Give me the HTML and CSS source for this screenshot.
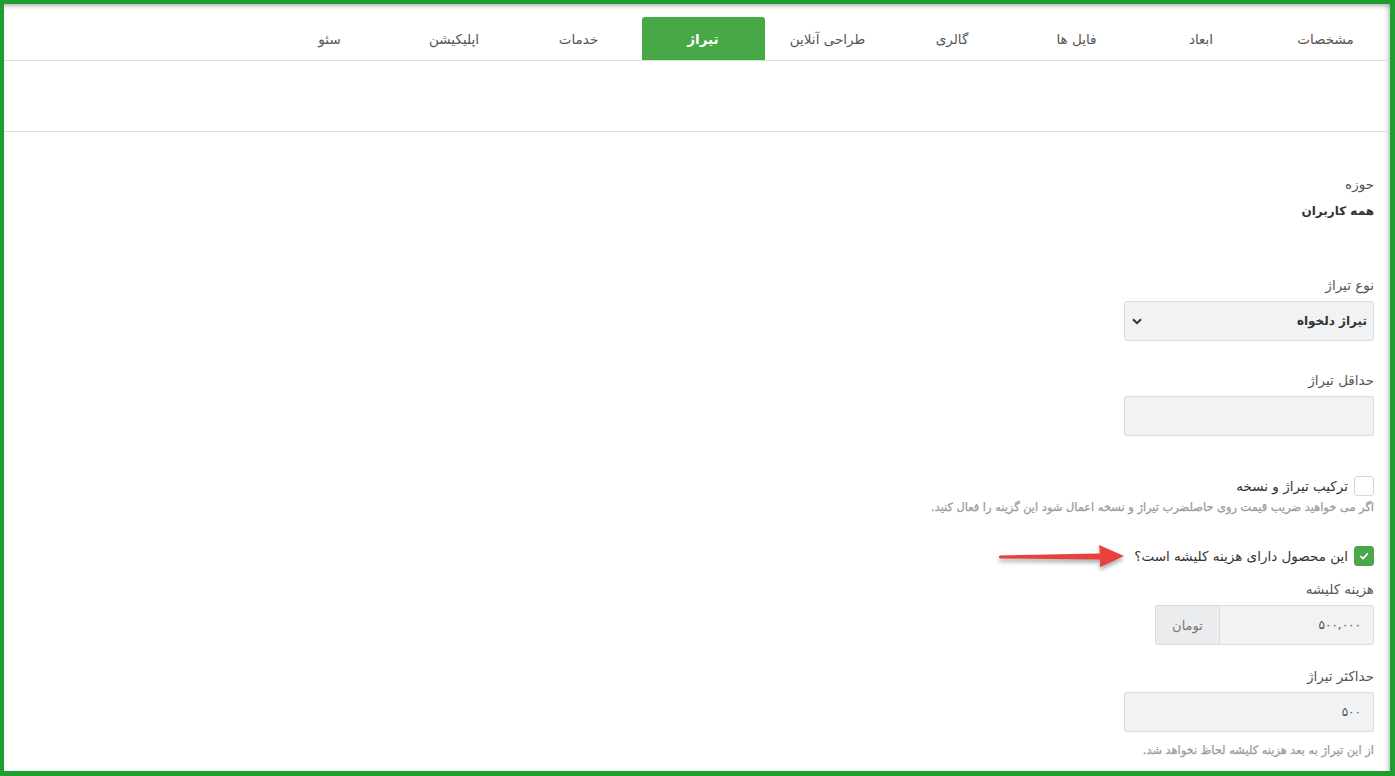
FILE: index.html
```html
<!DOCTYPE html>
<html lang="fa" dir="rtl">
<head>
<meta charset="utf-8">
<title>تیراژ</title>
<link rel="stylesheet" href="styles.css">
</head>
<body>
<div class="frame">
  <nav class="tabs">
    <a class="tab">مشخصات</a>
    <a class="tab">ابعاد</a>
    <a class="tab">فایل ها</a>
    <a class="tab">گالری</a>
    <a class="tab">طراحی آنلاین</a>
    <a class="tab active">تیراژ</a>
    <a class="tab">خدمات</a>
    <a class="tab">اپلیکیشن</a>
    <a class="tab">سئو</a>
  </nav>
  <div class="spacer"></div>
  <main class="form">
    <div class="group g-scope">
      <div class="label">حوزه</div>
      <div class="value">همه کاربران</div>
    </div>
    <div class="group g-type">
      <div class="label">نوع تیراژ</div>
      <div class="field select">
        <span class="select-text">تیراژ دلخواه</span>
        <svg class="chev" width="10" height="7" viewBox="0 0 10 7"><path d="M1 1.2 L5 5.2 L9 1.2" fill="none" stroke="#333" stroke-width="2"/></svg>
      </div>
    </div>
    <div class="group g-min">
      <div class="label">حداقل تیراژ</div>
      <div class="field input"></div>
    </div>
    <div class="group g-combo">
      <div class="check-row">
        <span class="box"></span>
        <span class="check-label">ترکیب تیراژ و نسخه</span>
      </div>
      <div class="help">اگر می خواهید ضریب قیمت روی حاصلضرب تیراژ و نسخه اعمال شود این گزینه را فعال کنید.</div>
    </div>
    <div class="group g-plate">
      <div class="check-row">
        <span class="box checked"><svg width="10" height="8" viewBox="0 0 10 8"><path d="M1.2 4 L4 6.6 L8.8 1.4" fill="none" stroke="#fff" stroke-width="1.6"/></svg></span>
        <span class="check-label">این محصول دارای هزینه کلیشه است؟</span>
        <svg class="arrow" width="136" height="34" viewBox="0 0 136 34"><path d="M4 14.5 L104 12.5 L103 4 L128 15 L104 26 L104 18.5 L4 17.5 Q1.5 16 4 14.5 Z" fill="#e8403b"/></svg>
      </div>
    </div>
    <div class="group g-cost">
      <div class="label">هزینه کلیشه</div>
      <div class="input-group">
        <div class="field input narrow"><span class="num">۵۰۰,۰۰۰</span></div>
        <div class="addon">تومان</div>
      </div>
    </div>
    <div class="group g-max">
      <div class="label">حداکثر تیراژ</div>
      <div class="field input"><span class="num">۵۰۰</span></div>
      <div class="help help-2">از این تیراژ به بعد هزینه کلیشه لحاظ نخواهد شد.</div>
    </div>
  </main>
</div>
</body>
</html>
```
FILE: styles.css
```css
html, body {
  margin: 0;
  padding: 0;
}
body {
  background: #1f9e2f;
  padding: 4px 5px 5px 4px;
  font-family: "DejaVu Sans", "Noto Sans", sans-serif;
  color: #333;
}
.frame {
  background: #fff;
  height: 767px;
  box-shadow: inset 0 5px 5px -3px rgba(0,0,0,0.28), inset -4px 0 4px -2px rgba(0,0,0,0.22);
  overflow: hidden;
  position: relative;
}
.tabs {
  display: flex;
  gap: 1.5px;
  padding: 13px 3px 0 0;
  height: 43px;
  border-bottom: 1px solid #dedede;
}
.tab {
  width: 123px;
  height: 43px;
  display: flex;
  align-items: center;
  justify-content: center;
  font-size: 13.5px;
  color: #555;
  border-radius: 3px 3px 0 0;
}
.tab.active {
  background: #47a846;
  color: #fff;
  font-weight: bold;
}
.spacer {
  height: 70px;
  border-bottom: 1px solid #dedede;
}
.form {
  padding: 42px 16px 0 0;
  display: flex;
  flex-direction: column;
  align-items: flex-start;
}
.group {
  display: flex;
  flex-direction: column;
  align-items: flex-start;
}
.label {
  font-size: 13.5px;
  line-height: 20px;
  color: #555;
  margin-bottom: 6px;
}
.value {
  font-size: 12px;
  font-weight: bold;
  line-height: 20px;
  color: #333;
  margin-top: 1px;
}
.g-type { margin-top: 54px; }
.g-min { margin-top: 29px; }
.g-combo { margin-top: 40px; }
.g-plate { margin-top: 30px; }
.g-cost { margin-top: 13px; }
.g-max { margin-top: 21px; }
.field {
  box-sizing: border-box;
  width: 250px;
  height: 40px;
  background: #f1f2f4;
  border: 1px solid #dcdcdc;
  border-radius: 3px;
  display: flex;
  align-items: center;
  justify-content: space-between;
  padding: 0 12px 0 7px;
}
.field.select {
  padding-right: 6px;
}
.select-text {
  font-size: 12px;
  font-weight: bold;
  color: #333;
}
.chev { display: block; }
.num {
  font-size: 12px;
  color: #555;
}
.check-row {
  display: flex;
  align-items: center;
  gap: 6px;
  height: 20px;
  position: relative;
}
.box {
  box-sizing: border-box;
  width: 20px;
  height: 20px;
  border: 1px solid #d6d6d6;
  border-radius: 3px;
  background: #fff;
  display: flex;
  align-items: center;
  justify-content: center;
}
.box.checked {
  background: #4aa84a;
  border-color: #4aa84a;
}
.box svg { display: block; }
.check-label {
  font-size: 13.5px;
  color: #333;
  line-height: 20px;
}
.help {
  font-size: 11.4px;
  font-weight: normal;
  color: #9a9a9a;
  line-height: 18px;
  margin-top: 2px;
  -webkit-text-stroke: 0.25px #9a9a9a;
}
.help-2 { margin-top: 9px; }
.arrow {
  position: absolute;
  left: -138px;
  top: -5px;
  filter: drop-shadow(0 3px 2px rgba(0,0,0,0.35));
}
.input-group {
  display: flex;
  width: 219px;
}
.field.narrow {
  width: 155px;
  border-radius: 0 3px 3px 0;
}
.addon {
  box-sizing: border-box;
  width: 64px;
  height: 40px;
  background: #ebecee;
  border: 1px solid #dcdcdc;
  border-right: 0;
  border-radius: 3px 0 0 3px;
  display: flex;
  align-items: center;
  justify-content: center;
  font-size: 13px;
  color: #777;
}
```
